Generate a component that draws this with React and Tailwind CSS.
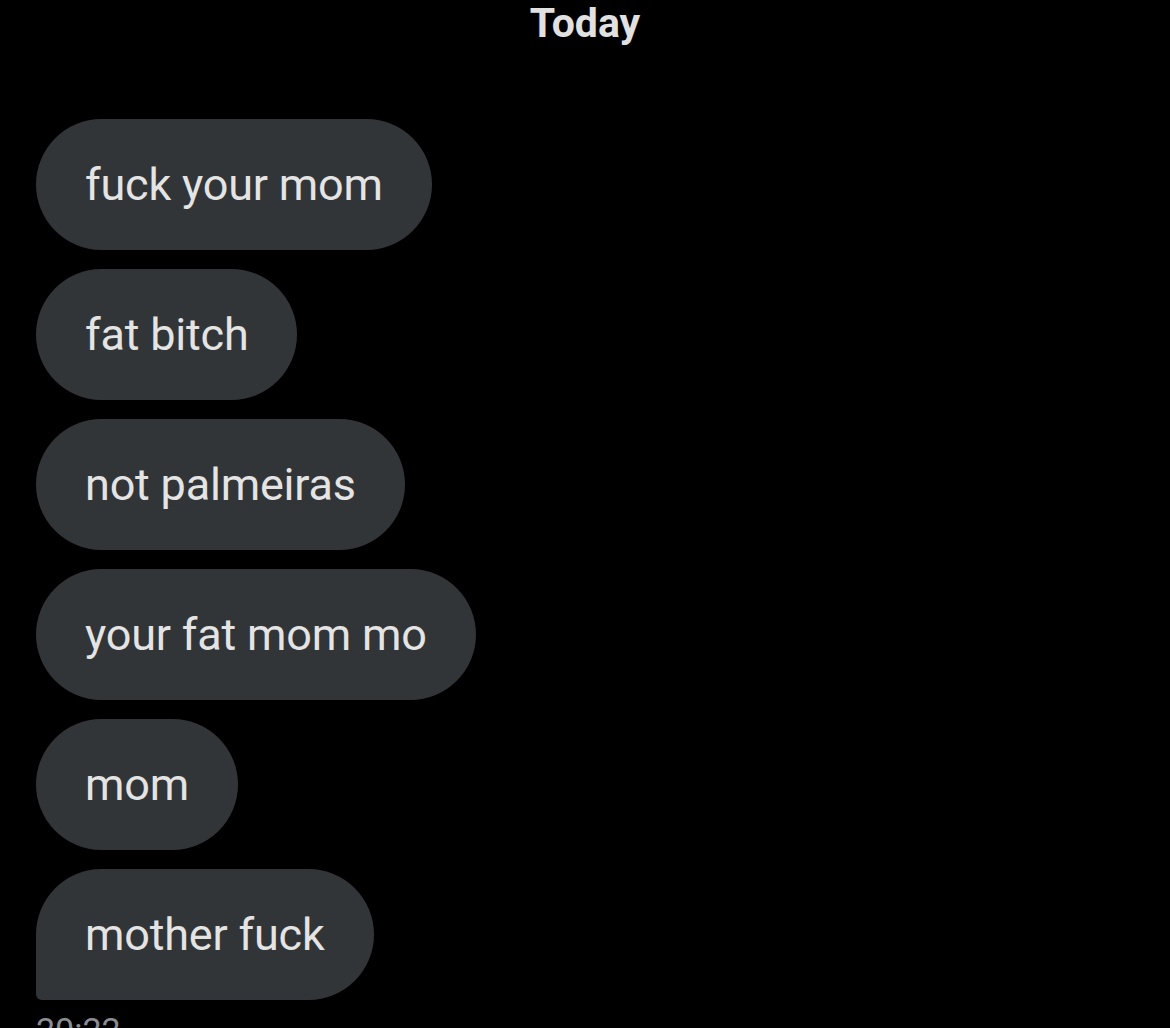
import React from 'react';

const messages = [
    'fuck your mom',
    'fat bitch',
    'not palmeiras',
    'your fat mom mo',
    'mom',
    'mother fuck',
];

export default function App() {
    return (
        <div
            className="w-[1170px] h-[1028px] overflow-hidden bg-black"
            style={{ fontFamily: 'Roboto, "Noto Sans", sans-serif' }}
        >
            {/* Day separator */}
            <div className="flex justify-center">
                <span className="text-[41px] leading-[46px] font-bold text-[#e1e1e1]">Today</span>
            </div>

            {/* Messages */}
            <div className="flex flex-col items-start gap-[19px] pl-[36px] pt-[73px]">
                {messages.map((m, i) => (
                    <div
                        key={i}
                        className={
                            i === messages.length - 1
                                ? 'h-[131px] flex items-center px-[49px] bg-[#323538] rounded-[66px] rounded-bl-[6px]'
                                : 'h-[131px] flex items-center px-[49px] bg-[#323538] rounded-[66px]'
                        }
                    >
                        <span className="text-[45px] leading-none tracking-[-0.2px] text-[#e4e4e4] whitespace-nowrap">{m}</span>
                    </div>
                ))}
            </div>

            {/* Timestamp */}
            <div className="pl-[36px] pt-[13px] text-[34px] leading-none text-[#8a8d91]">20:22</div>
        </div>
    );
}
